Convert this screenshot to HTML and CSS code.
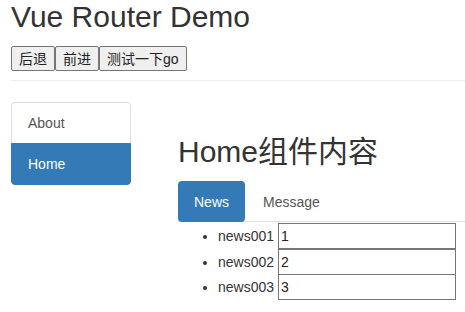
FILE: index.html
```html
<!DOCTYPE html>
<html lang="zh-CN">
<head>
  <meta charset="UTF-8">
  <meta name="viewport" content="width=device-width, initial-scale=1.0">
  <title>Vue Router Demo</title>
  <link rel="stylesheet" href="styles.css">
</head>
<body>
  <div class="page-header">
    <h2>Vue Router Demo</h2>
    <div class="btns">
      <button class="btn">后退</button>
      <button class="btn">前进</button>
      <button class="btn">测试一下go</button>
    </div>
  </div>

  <div class="main">
    <div class="list-group">
      <a class="list-item" href="#about">About</a>
      <a class="list-item active" href="#home">Home</a>
    </div>

    <div class="content">
      <h2>Home组件内容</h2>
      <div class="nav">
        <a class="nav-link active" href="#news">News</a>
        <a class="nav-link" href="#message">Message</a>
      </div>
      <ul class="news-list">
        <li>news001 <input class="news-input" type="text" value="1"></li>
        <li>news002 <input class="news-input" type="text" value="2"></li>
        <li>news003 <input class="news-input" type="text" value="3"></li>
      </ul>
    </div>
  </div>
</body>
</html>
```

FILE: styles.css
```css
body {
  margin: 0;
  font-family: "Liberation Sans", "Noto Sans CJK SC", sans-serif;
  font-size: 14px;
  line-height: 20px;
  color: #333;
  background: #fff;
}

h2 {
  font-size: 30px;
  font-weight: normal;
  line-height: 33px;
  margin: 0;
}

a {
  text-decoration: none;
}

/* header */
.page-header {
  margin-left: 11px;
  padding-bottom: 9px;
  border-bottom: 1px solid #eee;
}

.page-header h2 {
  margin-bottom: 13px;
}

.btns {
  display: flex;
}

.btn {
  margin: 0;
  font-family: inherit;
  font-size: 14px;
  line-height: 20px;
  color: #222;
  padding: 2px 7px 1px;
  background: #efefef;
  border: 1px solid #767676;
  border-radius: 2px;
}

/* body */
.main {
  display: flex;
  align-items: flex-start;
  margin-top: 21px;
  padding-left: 11px;
}

.list-group {
  width: 120px;
  flex: none;
}

.list-item {
  display: block;
  padding: 10px 16px;
  color: #555;
  border: 1px solid #ddd;
  border-radius: 4px 4px 0 0;
}

.list-item.active {
  margin-top: -1px;
  color: #fff;
  background: #337ab7;
  border-color: #337ab7;
  border-radius: 0 0 4px 4px;
}

.content {
  flex: 1;
  margin-left: 47px;
}

.content h2 {
  margin-top: 33px;
  margin-bottom: 13px;
}

.nav {
  display: flex;
  border-bottom: 1px solid #ddd;
}

.nav-link {
  padding: 11px 16px 10px;
  margin-bottom: -1px;
  color: #555;
  border-radius: 4px;
}

.nav-link.active {
  color: #fff;
  background: #337ab7;
}

.nav-link + .nav-link {
  margin-left: 2px;
}

.news-list {
  margin: 1px 0 0;
  padding-left: 40px;
}

.news-list li {
  height: 25.5px;
  line-height: 26px;
}

.news-input {
  box-sizing: border-box;
  width: 178px;
  height: 26px;
  margin: 0;
  padding: 1px 2px;
  font-family: "Liberation Sans", sans-serif;
  font-size: 14px;
  color: #222;
  border: 1px solid #767676;
  vertical-align: top;
}
```
